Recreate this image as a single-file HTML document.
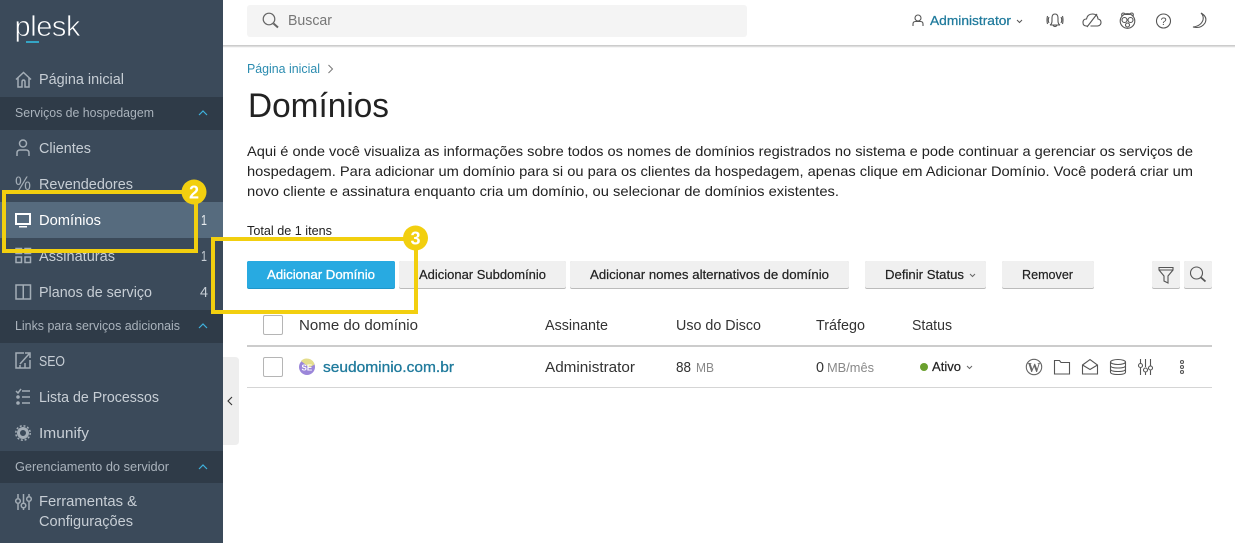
<!DOCTYPE html>
<html lang="pt-BR"><head><meta charset="utf-8"><title>Domínios - Plesk</title>
<style>
html,body{margin:0;padding:0;width:1235px;height:543px;overflow:hidden;background:#fff}
svg{display:block}
text{font-family:"Liberation Sans",sans-serif;white-space:pre}
.n{font-size:14.5px;fill:#c7ced5}
.s{font-size:12.5px;fill:#aab3bc}
.b{font-size:12.5px;fill:#222;font-weight:400;stroke:#222;stroke-width:.2}
.p{font-size:14px;fill:#222}
.h{font-size:14.5px;fill:#333}
.i{fill:none;stroke:#555;stroke-width:1.1}
.sb{fill:none;stroke:#a3adb6;stroke-width:1.5}
</style></head><body>
<svg width="1235" height="543" viewBox="0 0 1235 543" xmlns="http://www.w3.org/2000/svg">
<rect width="1235" height="543" fill="#fff"/>
<!-- sidebar -->
<rect width="223" height="543" fill="#3b4a5a"/>
<rect y="97" width="223" height="33" fill="#2f3b48"/>
<rect y="310" width="223" height="33" fill="#2f3b48"/>
<rect y="451" width="223" height="32" fill="#2f3b48"/>
<rect y="202" width="223" height="36" fill="#566b7e"/>
<text x="14.500" y="36" fill="#fff" stroke="#3b4a5a" stroke-width=".7" textLength="66" lengthAdjust="spacing" style="font-size:29px">plesk</text>
<rect x="26" y="41" width="13" height="2" fill="#35a5c5"/>
<path class="sb" d="M16 79.500L23.500 72.500 31 79.500M18 78v9h4v-5q0-2 1.500-2t1.500 2v5h4v-9"/>
<text class="n" x="39" y="84" textLength="85" lengthAdjust="spacingAndGlyphs">Página inicial</text>
<text class="s" x="15" y="117" textLength="139" lengthAdjust="spacingAndGlyphs">Serviços de hospedagem</text>
<path d="M199 115l4-4 4 4" fill="none" stroke="#3fb2dd" stroke-width="1.200"/>
<circle class="sb" cx="23" cy="143.500" r="3.500"/><path class="sb" d="M17 156v-3q0-3 3-3h6q3 0 3 3v3"/>
<text class="n" x="39" y="153" textLength="52" lengthAdjust="spacingAndGlyphs">Clientes</text>
<text x="15" y="190" fill="#a3adb6" textLength="16" lengthAdjust="spacingAndGlyphs" style="font-size:19px">%</text>
<text class="n" x="39" y="189" textLength="94" lengthAdjust="spacingAndGlyphs">Revendedores</text>
<rect x="16" y="214" width="14" height="10" fill="none" stroke="#fff" stroke-width="2"/><rect x="19" y="226" width="8" height="1.500" fill="#fff"/>
<text class="n" x="39" y="225" textLength="62" lengthAdjust="spacingAndGlyphs" style="fill:#fff">Domínios</text>
<text class="n" x="201" y="225" textLength="6" lengthAdjust="spacingAndGlyphs" style="fill:#e8ecef">1</text>
<path class="sb" d="M16 248.500h5.500v5H16zM25 248.500h5.500v5H25zM16 257h5.500v5.500H16zM25 257h5.500v5.500H25z"/>
<text class="n" x="39" y="261" textLength="76" lengthAdjust="spacingAndGlyphs">Assinaturas</text>
<text class="n" x="201" y="261" textLength="6" lengthAdjust="spacingAndGlyphs">1</text>
<path class="sb" d="M16 285h14.500v14H16zM23.250 285v14"/>
<text class="n" x="39" y="297" textLength="113" lengthAdjust="spacingAndGlyphs">Planos de serviço</text>
<text class="n" x="200" y="297" textLength="8" lengthAdjust="spacingAndGlyphs">4</text>
<text class="s" x="15" y="330" textLength="165" lengthAdjust="spacingAndGlyphs">Links para serviços adicionais</text>
<path d="M199 328l4-4 4 4" fill="none" stroke="#3fb2dd" stroke-width="1.200"/>
<path class="sb" d="M24 353h-8v15h14v-8M20 364l9-10M25 353h5v5M20 368v-3M25 368v-5"/>
<text class="n" x="39" y="366" textLength="26" lengthAdjust="spacingAndGlyphs">SEO</text>
<path class="sb" d="M22 391h8M22 397h8M22 403h8M16 391l2 2 3-4"/><circle cx="18" cy="397" r="1.800" fill="#a3adb6"/><circle cx="18" cy="403" r="1.800" fill="#a3adb6"/>
<text class="n" x="39" y="402" textLength="120" lengthAdjust="spacingAndGlyphs">Lista de Processos</text>
<circle cx="23" cy="433" r="4.500" fill="none" stroke="#a3adb6" stroke-width="3"/><circle cx="23" cy="433" r="7.200" fill="none" stroke="#a3adb6" stroke-width="1.500" stroke-dasharray="2 1.800"/>
<text class="n" x="39" y="438" textLength="50" lengthAdjust="spacingAndGlyphs">Imunify</text>
<text class="s" x="15" y="471" textLength="154" lengthAdjust="spacingAndGlyphs">Gerenciamento do servidor</text>
<path d="M199 469l4-4 4 4" fill="none" stroke="#3fb2dd" stroke-width="1.200"/>
<path class="sb" d="M18 494v4M18 504v6M23.500 494v9M23.500 508v2M29 494v2M29 502v8"/><circle class="sb" cx="18" cy="501" r="2.300"/><circle class="sb" cx="23.500" cy="505.500" r="2.300"/><circle class="sb" cx="29" cy="499" r="2.300"/>
<text class="n" x="39" y="506" textLength="98" lengthAdjust="spacingAndGlyphs">Ferramentas &amp;</text>
<text class="n" x="39" y="526" textLength="94" lengthAdjust="spacingAndGlyphs">Configurações</text>
<!-- collapse tab -->
<path d="M223 357h12q4 0 4 4v80q0 4-4 4h-12z" fill="#eee"/>
<path d="M232 397l-4 4 4 4" fill="none" stroke="#333" stroke-width="1.100"/>
<!-- header -->
<rect x="223" y="45" width="1012" height="1.500" fill="#ccc"/>
<rect x="223" y="46.500" width="1012" height="1" fill="#eee"/>
<rect x="247" y="5" width="500" height="32" rx="3" fill="#f4f4f4"/>
<circle cx="269" cy="19" r="5.800" fill="none" stroke="#666" stroke-width="1.200"/><path d="M273.500 23.500l4.500 4" stroke="#666" stroke-width="2" fill="none"/>
<text x="288" y="25" fill="#777" textLength="44" lengthAdjust="spacingAndGlyphs" style="font-size:14.5px">Buscar</text>
<circle class="i" cx="918" cy="18" r="3"/><path class="i" d="M913 26v-2q0-2.500 2.500-2.500h5q2.500 0 2.500 2.500v2"/>
<text x="930" y="25" style="font-size:12.5px;fill:#1f7a9c;stroke:#1f7a9c;stroke-width:.25" textLength="81" lengthAdjust="spacingAndGlyphs">Administrator</text>
<path d="M1017 20l2.500 2.500 2.500-2.500" fill="none" stroke="#555"/>
<path class="i" d="M1050 25q2-1 2-4v-3q0-4 3-4t3 4v3q0 3 2 4zM1053 25.500q2 2 4 0M1049 17q-1.500 3 0 6M1047.500 16q-1 4 0 8M1061 17q1.500 3 0 6M1062.500 16q1 4 0 8"/>
<path class="i" d="M1088 26h-1.500q-3.500 0-3.500-3.500t3.500-3.500q1-5 6-5t5.500 5q3 .5 3 3.500t-3.500 3.500h-7M1087 27l10-13"/>
<circle class="i" cx="1127.500" cy="21" r="7.300"/><path class="i" d="M1122 16q-1-2.500 1-3 2 0 2.500 1.500h4q.5-1.500 2.500-1.500 2 .5 1 3"/><circle class="i" cx="1124.500" cy="20" r="2.500"/><circle class="i" cx="1130.500" cy="20" r="2.500"/><circle class="i" cx="1127.500" cy="25" r="2"/>
<circle class="i" cx="1163.500" cy="21" r="7"/><text x="1160.500" y="25" style="font-size:11px;fill:#555">?</text>
<path class="i" d="M1201 13Q1208 17 1205 23 1201 29 1193 27 1201 26 1203 20 1204 16 1201 13z"/>
<!-- breadcrumb -->
<text x="247" y="73" style="font-size:12.5px;fill:#2b8cb0" textLength="73" lengthAdjust="spacingAndGlyphs">Página inicial</text>
<path d="M328.500 65l4 4-4 4" fill="none" stroke="#777"/>
<text x="248" y="117" style="font-size:34px;fill:#222" textLength="141" lengthAdjust="spacingAndGlyphs">Domínios</text>
<text class="p" x="247" y="156" textLength="946" lengthAdjust="spacingAndGlyphs">Aqui é onde você visualiza as informações sobre todos os nomes de domínios registrados no sistema e pode continuar a gerenciar os serviços de</text>
<text class="p" x="247" y="176" textLength="946" lengthAdjust="spacingAndGlyphs">hospedagem. Para adicionar um domínio para si ou para os clientes da hospedagem, apenas clique em Adicionar Domínio. Você poderá criar um</text>
<text class="p" x="247" y="196" textLength="592" lengthAdjust="spacingAndGlyphs">novo cliente e assinatura enquanto cria um domínio, ou selecionar de domínios existentes.</text>
<text x="247" y="235" style="font-size:12.5px;fill:#222" textLength="85" lengthAdjust="spacingAndGlyphs">Total de 1 itens</text>
<!-- buttons -->
<rect x="247" y="261" width="148" height="28" rx="2" fill="#1f96c9"/><rect x="247" y="261" width="148" height="27" rx="2" fill="#28aae1"/>
<g fill="#bbb"><rect x="399" y="261" width="167" height="28" rx="2"/><rect x="570" y="261" width="279" height="28" rx="2"/><rect x="865" y="261" width="121" height="28" rx="2"/><rect x="1002" y="261" width="92" height="28" rx="2"/><rect x="1152" y="261" width="28" height="28" rx="2"/><rect x="1184" y="261" width="28" height="28" rx="2"/></g>
<g fill="#f0f0f0"><rect x="399" y="261" width="167" height="27" rx="2"/><rect x="570" y="261" width="279" height="27" rx="2"/><rect x="865" y="261" width="121" height="27" rx="2"/><rect x="1002" y="261" width="92" height="27" rx="2"/><rect x="1152" y="261" width="28" height="27" rx="2"/><rect x="1184" y="261" width="28" height="27" rx="2"/></g>
<text x="267" y="279" style="font-size:12.5px;fill:#fff;stroke:#fff;stroke-width:.3" textLength="108" lengthAdjust="spacingAndGlyphs">Adicionar Domínio</text>
<text class="b" x="419" y="279" textLength="127" lengthAdjust="spacingAndGlyphs">Adicionar Subdomínio</text>
<text class="b" x="590" y="279" textLength="239" lengthAdjust="spacingAndGlyphs">Adicionar nomes alternativos de domínio</text>
<text class="b" x="885" y="279" textLength="79" lengthAdjust="spacingAndGlyphs">Definir Status</text>
<path d="M970 274l2.500 2.500 2.500-2.500" fill="none" stroke="#666"/>
<text class="b" x="1022" y="279" textLength="51" lengthAdjust="spacingAndGlyphs">Remover</text>
<path class="i" d="M1159 267.500h14v2.500l-5 6v7l-4-2v-5l-5-6zM1159 270h14"/>
<circle class="i" cx="1196.500" cy="273" r="6"/><path d="M1201 277.500l4.500 4" stroke="#555" stroke-width="1.800" fill="none"/>
<!-- table -->
<rect x="263.500" y="315.500" width="19" height="19" rx="1.500" fill="#fff" stroke="#b5b5b5"/>
<text class="h" x="299" y="330" textLength="119" lengthAdjust="spacingAndGlyphs">Nome do domínio</text>
<text class="h" x="545" y="330" textLength="63" lengthAdjust="spacingAndGlyphs">Assinante</text>
<text class="h" x="676" y="330" textLength="85" lengthAdjust="spacingAndGlyphs">Uso do Disco</text>
<text class="h" x="816" y="330" textLength="49" lengthAdjust="spacingAndGlyphs">Tráfego</text>
<text class="h" x="912" y="330" textLength="40" lengthAdjust="spacingAndGlyphs">Status</text>
<rect x="247" y="345" width="965" height="2" fill="#ccc"/>
<rect x="247" y="387" width="965" height="1" fill="#d5d5d5"/>
<rect x="263.500" y="357.500" width="19" height="19" rx="1.500" fill="#fff" stroke="#b5b5b5"/>
<circle cx="307" cy="367" r="8" fill="#9b86d9"/><path d="M301 361a8 8 0 0 1 13.500 3.500l-5 3z" fill="#e4dd8c"/>
<text x="301.500" y="370.500" style="font-size:8px;fill:#fff;font-weight:700">SE</text>
<text x="323" y="372" style="font-size:14.5px;fill:#1f7a9c;stroke:#1f7a9c;stroke-width:.3" textLength="131" lengthAdjust="spacingAndGlyphs">seudominio.com.br</text>
<text class="h" x="545" y="372" textLength="90" lengthAdjust="spacingAndGlyphs">Administrator</text>
<text class="h" x="676" y="372" textLength="15" lengthAdjust="spacingAndGlyphs">88</text>
<text x="696" y="372" style="font-size:12.5px;fill:#888" textLength="18" lengthAdjust="spacingAndGlyphs">MB</text>
<text class="h" x="816" y="372" textLength="8" lengthAdjust="spacingAndGlyphs">0</text>
<text x="827" y="372" style="font-size:12.5px;fill:#888" textLength="47" lengthAdjust="spacingAndGlyphs">MB/mês</text>
<circle cx="924" cy="367" r="4" fill="#6aa02e"/>
<text class="b" x="932" y="371" textLength="29" lengthAdjust="spacingAndGlyphs">Ativo</text>
<path d="M967 366l2.500 2.500 2.500-2.500" fill="none" stroke="#666"/>
<circle cx="1034" cy="367" r="7.700" fill="none" stroke="#666" stroke-width="1.100"/><text x="1027.500" y="372" style="font-size:14px;fill:#666;font-family:'Liberation Serif',serif;font-weight:700" textLength="13" lengthAdjust="spacingAndGlyphs">W</text>
<path class="i" d="M1054.500 360.500h5l1.500 2h8.500V374h-15z"/>
<path class="i" d="M1082.500 365l7.500-5.500 7.500 5.500v9h-15zM1082.500 365l7.500 4.500 7.500-4.500"/>
<ellipse class="i" cx="1118" cy="362" rx="7.500" ry="2.500"/><path class="i" d="M1110.500 362v10q0 2.500 7.500 2.500t7.500-2.500v-10M1110.500 365.500q0 2.500 7.500 2.500t7.500-2.500M1110.500 369q0 2.500 7.500 2.500t7.500-2.500"/>
<path class="i" d="M1140.500 359v4M1140.500 368v7M1145.500 359v8M1145.500 372v3M1150.500 359v7M1150.500 370.500v4.500"/><circle class="i" cx="1140.500" cy="365.500" r="2"/><circle class="i" cx="1145.500" cy="370" r="2"/><circle class="i" cx="1150.500" cy="368" r="2"/>
<circle class="i" cx="1182" cy="362" r="1.500"/><circle class="i" cx="1182" cy="367" r="1.500"/><circle class="i" cx="1182" cy="372" r="1.500"/>
<!-- annotations -->
<rect x="4" y="192" width="192" height="59" fill="none" stroke="#f2cf0f" stroke-width="4"/>
<circle cx="194" cy="192" r="12.500" fill="#f2cf0f"/>
<text x="194" y="198.500" text-anchor="middle" style="font-size:18px;font-weight:700;fill:#fff">2</text>
<rect x="213" y="239" width="203" height="73" fill="none" stroke="#f2cf0f" stroke-width="4"/>
<circle cx="415.500" cy="238" r="12.500" fill="#f2cf0f"/>
<text x="415.500" y="244.500" text-anchor="middle" style="font-size:18px;font-weight:700;fill:#fff">3</text>
</svg>
</body></html>
